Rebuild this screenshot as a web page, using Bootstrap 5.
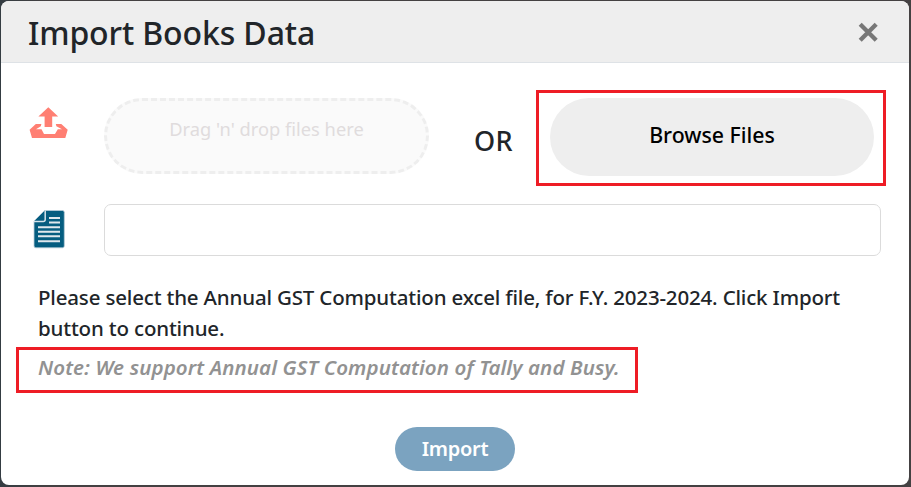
<!DOCTYPE html>
<html lang="en">
<head>
<meta charset="utf-8">
<meta name="viewport" content="width=device-width, initial-scale=1">
<title>Import Books Data</title>
<link href="https://cdn.jsdelivr.net/npm/bootstrap@5.3.0/dist/css/bootstrap.min.css" rel="stylesheet">
<style>
body{font-family:"Noto Sans","Open Sans",sans-serif;background:linear-gradient(90deg,#343c42 0,#444142 48px);height:487px;padding:1px 2px 2px 1px;overflow:hidden;color:#212529}
.dialog-box{height:484px;border-radius:8px;background:#fff}
.dialog-head{height:62px;flex:none;background:#eee;border-bottom:1px solid #dee2e6;padding:2px 29px 0 27px}
.dialog-title{font-size:32px;font-weight:500;line-height:1.2;letter-spacing:-.12px;padding-top:2px;white-space:nowrap}
.close-btn{width:24px;height:24px}
.upload-row{height:96px;margin-top:27px}
.icon-cell{width:103px;padding-left:28px;flex:none}
.drop-zone{width:325px;height:76px;margin-top:8px;border:3px dashed #eee;border-radius:38px;background:#fafafa;color:#e0dcdd;font-size:18.3px;line-height:27px;padding-top:14px;flex:none}
.or-label{width:107px;font-size:27px;font-weight:500;line-height:32px;letter-spacing:.3px;margin-top:35px;padding-left:45px;flex:none}
.mark-frame{border:3px solid #ee1c25}
.browse-frame{width:350px;height:96px;padding:5px 9px 7px 11px;flex:none}
.browse-btn,.browse-btn:hover{height:78px;border-radius:39px;background:#eee;color:#000;font-size:21.3px;font-weight:500;border:0;padding:0 0 5px}
.file-row{height:52px;margin-top:18px}
.file-field{width:777px;height:52px;border:1px solid #dbdbdb;border-radius:7px}
.help-copy{font-size:20.5px;font-weight:500;line-height:31px;letter-spacing:-.17px;margin:26px 0 0 37px;white-space:nowrap}
.note-frame{width:622px;height:46px;margin:3px 0 0 15px;padding:0 0 5px 19px;font-size:20.5px;font-weight:600;font-style:italic;letter-spacing:.11px;color:#929292;white-space:nowrap}
.import-btn,.import-btn:hover{width:120px;height:44px;margin-top:34px;border:0;border-radius:22px;background:#7ba3c0;color:#fff;font-size:20px;font-weight:600;letter-spacing:-.3px;padding:0}
</style>
</head>
<body>
<main class="dialog-box d-flex flex-column overflow-hidden">
  <header class="dialog-head d-flex align-items-center justify-content-between">
    <h1 class="dialog-title mb-0">Import Books Data</h1>
    <button class="close-btn btn p-0 border-0 d-flex" aria-label="Close">
      <svg width="24" height="24" viewBox="0 0 24 24"><path d="M4.2 3.2 20.2 19.2M20.2 3.2 4.2 19.2" stroke="#777" stroke-width="4.3"/></svg>
    </button>
  </header>
  <section class="upload-row d-flex">
    <div class="icon-cell pt-3">
      <svg width="40" height="34" viewBox="0 0 40 34" fill="#ff7f73"><path d="M19.3 1.2 29.2 10.6H23.2V21H15.6V10.6H9.4ZM6.8 18H12.4L11.8 20.3 7 23.2H12.5L15 28H26L28.8 23.2H33L27.4 20.3 26.8 18H32.3L38.7 23.8 36.3 32H3L.6 23.8Z"/></svg>
    </div>
    <div class="drop-zone text-center">Drag 'n' drop files here</div>
    <div class="or-label">OR</div>
    <div class="mark-frame browse-frame"><button class="browse-btn btn w-100">Browse Files</button></div>
  </section>
  <section class="file-row d-flex">
    <div class="icon-cell">
      <svg width="40" height="46" viewBox="0 0 40 46"><path d="M15.5 6.5H33.5Q35.3 6.5 35.3 8.3V42Q35.3 43.8 33.5 43.8H6.8Q5 43.8 5 42V17Z" fill="#055d80" stroke="#b9cdd8" stroke-width=".8"/><path d="M5 17.5H14.2Q16.2 17.5 16.2 15.5V6.5" fill="none" stroke="#d7e4eb" stroke-width="1.5"/><path d="M20 14H31M20 18.5H31M9 23.2H31M9 27.7H31M9 32.3H31M9 37.3H31" stroke="#dfe8ed" stroke-width="2"/></svg>
    </div>
    <div class="file-field"></div>
  </section>
  <p class="help-copy">Please select the Annual GST Computation excel file, for F.Y. 2023-2024. Click Import<br>button to continue.</p>
  <div class="mark-frame note-frame d-flex align-items-center">Note: We support Annual GST Computation of Tally and Busy.</div>
  <button class="import-btn btn align-self-center">Import</button>
</main>
<script src="https://cdn.jsdelivr.net/npm/bootstrap@5.3.0/dist/js/bootstrap.bundle.min.js"></script>
</body>
</html>
